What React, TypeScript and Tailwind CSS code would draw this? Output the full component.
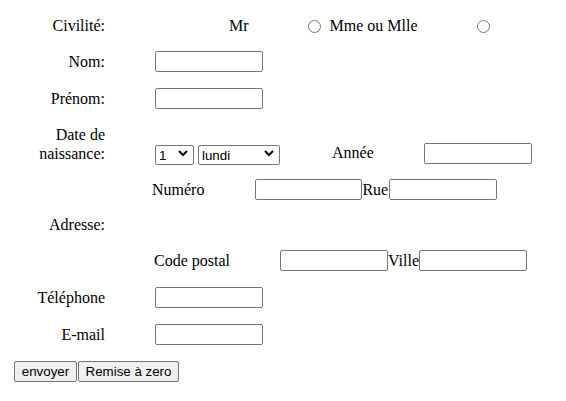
import { useState } from "react";

const serif = "font-['Liberation_Serif','Times_New_Roman',serif]";
const sans = "font-['Liberation_Sans',Arial,sans-serif]";
const inputCls = `h-[21px] w-[108px] shrink-0 rounded-[2px] border border-[#767676] bg-white px-[2px] text-[13.33px] ${sans}`;

function Chevron() {
    return (
        <svg
            width="10"
            height="7"
            viewBox="0 0 10 7"
            className="pointer-events-none absolute right-[6px] top-1/2 -translate-y-1/2"
        >
            <polyline points="1,1.5 5,5.5 9,1.5" fill="none" stroke="#000" strokeWidth="2" />
        </svg>
    );
}

function Select({ width, options }: { width: string; options: string[] }) {
    return (
        <div className={`relative ${width} h-[20px] shrink-0`}>
            <select
                className={`h-full w-full appearance-none rounded-[2px] border border-[#767676] bg-white pl-[3px] text-[13.33px] text-black ${sans}`}
            >
                {options.map((o) => (
                    <option key={o}>{o}</option>
                ))}
            </select>
            <Chevron />
        </div>
    );
}

export default function App() {
    const [civ, setCiv] = useState("");
    const jours = Array.from({ length: 31 }, (_, i) => String(i + 1));
    const semaine = ["lundi", "mardi", "mercredi", "jeudi", "vendredi", "samedi", "dimanche"];

    return (
        <div className={`min-h-screen bg-white text-[16px] text-black ${serif}`}>
            <form onSubmit={(e) => e.preventDefault()} className="flex flex-col pt-[8px]">
                {/* Civilité */}
                <div className="flex h-[36px] items-center">
                    <div className="w-[105px] text-right">Civilité:</div>
                    <span className="ml-[124px]">Mr</span>
                    <input
                        type="radio"
                        name="civ"
                        checked={civ === "mr"}
                        onChange={() => setCiv("mr")}
                        className="ml-[59px] h-[13px] w-[13px]"
                    />
                    <span className="ml-[9px]">Mme ou Mlle</span>
                    <input
                        type="radio"
                        name="civ"
                        checked={civ === "mme"}
                        onChange={() => setCiv("mme")}
                        className="ml-[59px] h-[13px] w-[13px]"
                    />
                </div>

                {/* Nom */}
                <div className="flex h-[35px] items-center">
                    <div className="w-[105px] text-right">Nom:</div>
                    <input type="text" name="nom" className={`ml-[50px] ${inputCls}`} />
                </div>

                {/* Prénom */}
                <div className="flex h-[39px] items-center">
                    <div className="w-[105px] text-right">Prénom:</div>
                    <input type="text" name="prenom" className={`ml-[50px] ${inputCls}`} />
                </div>

                {/* Date de naissance */}
                <div className="flex h-[52px] items-center">
                    <div className="w-[105px] text-right leading-[19px]">
                        Date de
                        <br />
                        naissance:
                    </div>
                    <div className="ml-[50px] flex items-center pt-[18px]">
                        <Select width="w-[39px]" options={jours} />
                        <div className="ml-[4px]">
                            <Select width="w-[82px]" options={semaine} />
                        </div>
                        <span className="ml-[52px]">Année</span>
                        <input type="text" name="annee" className={`ml-[50px] ${inputCls}`} />
                    </div>
                </div>

                {/* Adresse */}
                <div className="flex h-[110px] items-center">
                    <div className="w-[105px] text-right">Adresse:</div>
                    <div className="flex h-full flex-col justify-between">
                        <div className="flex h-[39px] items-center">
                            <span className="ml-[47px]">Numéro</span>
                            <input type="text" name="numero" className={`ml-[51px] !w-[107px] ${inputCls}`} />
                            <span>Rue</span>
                            <input type="text" name="rue" className={`ml-[1px] ${inputCls}`} />
                        </div>
                        <div className="flex h-[39px] items-center">
                            <span className="ml-[49px]">Code postal</span>
                            <input type="text" name="cp" className={`ml-[50px] ${inputCls}`} />
                            <span>Ville</span>
                            <input type="text" name="ville" className={inputCls} />
                        </div>
                    </div>
                </div>

                {/* Téléphone */}
                <div className="flex h-[35px] items-center">
                    <div className="w-[105px] text-right">Téléphone</div>
                    <input type="text" name="tel" className={`ml-[50px] ${inputCls}`} />
                </div>

                {/* E-mail */}
                <div className="flex h-[39px] items-center">
                    <div className="w-[105px] text-right">E-mail</div>
                    <input type="text" name="email" className={`ml-[50px] ${inputCls}`} />
                </div>

                <div className={`ml-[14px] mt-[7px] flex text-[13.33px] ${sans}`}>
                    <button
                        type="submit"
                        className="h-[21px] w-[63px] rounded-[2px] border border-[#767676] bg-[#efefef]"
                    >
                        envoyer
                    </button>
                    <button
                        type="reset"
                        className="ml-[1px] h-[21px] w-[101px] rounded-[2px] border border-[#767676] bg-[#efefef]"
                    >
                        Remise à zero
                    </button>
                </div>
            </form>
        </div>
    );
}
